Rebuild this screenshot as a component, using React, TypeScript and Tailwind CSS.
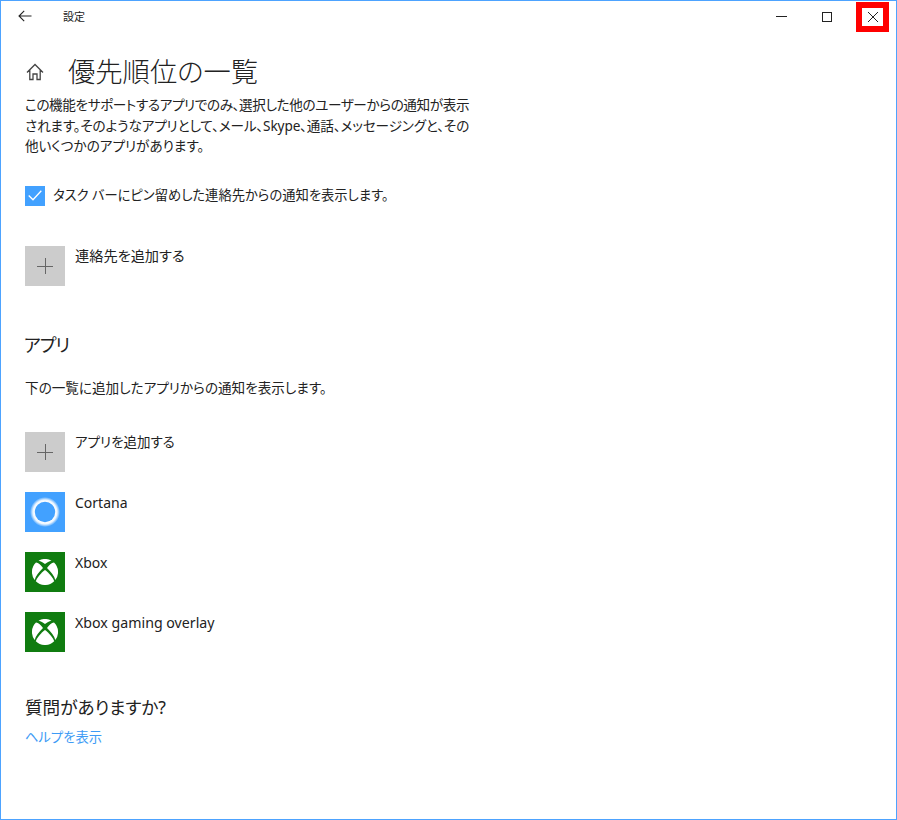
import type { ReactNode } from 'react';

const font = "font-['Noto_Sans','Noto_Sans_CJK_JP',sans-serif] [font-feature-settings:'palt']";

function XboxIcon() {
  return (
    <div className="flex h-10 w-10 shrink-0 items-center justify-center bg-[#107c10]">
      <svg viewBox="0 0 26 26" className="h-[26px] w-[26px]" fill="#fff">
        <path d="M6.5 1.8 A13 13 0 0 1 19.5 1.8 C17 2.2 15 3.5 13 5 C11 3.5 9 2.2 6.5 1.8Z" />
        <path d="M4 3.6 C6.5 3.8 9 6.5 11 9 C7 13 3.5 17 2.7 21 A13 13 0 0 1 4 3.6Z" />
        <path d="M22 3.6 C19.5 3.8 17 6.5 15 9 C19 13 22.5 17 23.3 21 A13 13 0 0 0 22 3.6Z" />
        <path d="M13 11 C16.5 13.5 21 18.5 22.2 22.2 A13 13 0 0 1 3.8 22.2 C5 18.5 9.5 13.5 13 11Z" />
      </svg>
    </div>
  );
}

function CortanaIcon() {
  return (
    <div className="flex h-10 w-10 shrink-0 items-center justify-center bg-[#42a1ff]">
      <svg viewBox="0 0 30 30" className="h-[30px] w-[30px]">
        <defs>
          <radialGradient id="cortana-glow" cx="50%" cy="50%" r="50%">
            <stop offset="68%" stopColor="#fff" stopOpacity="1" />
            <stop offset="80%" stopColor="#fff" stopOpacity="0.9" />
            <stop offset="100%" stopColor="#fff" stopOpacity="0" />
          </radialGradient>
        </defs>
        <circle cx="15" cy="15" r="15" fill="url(#cortana-glow)" />
        <circle cx="15" cy="15" r="10.2" fill="#42a1ff" />
      </svg>
    </div>
  );
}

function AddTile() {
  return (
    <div className="flex h-10 w-10 shrink-0 items-center justify-center bg-[#cccccc]">
      <svg viewBox="0 0 16 16" className="h-4 w-4" stroke="#666666" strokeWidth="1">
        <path d="M0 8.5 H16 M8.5 0 V16" />
      </svg>
    </div>
  );
}

function Row({ icon, label, labelClass }: { icon: ReactNode; label: string; labelClass: string }) {
  return (
    <div className="flex h-10 gap-2.5">
      {icon}
      <span className={`leading-5 text-[#222222] ${labelClass}`}>{label}</span>
    </div>
  );
}

export default function App() {
  return (
    <div className={`flex h-[820px] w-[897px] flex-col border border-[#4da3ff] bg-white ${font}`}>
      <div className="flex h-[31px] shrink-0 items-center">
        <svg viewBox="0 0 14 12" className="ml-[17px] -mt-[2px] h-3 w-[14px]" fill="none" stroke="#222222" strokeWidth="1.1">
          <path d="M13.5 6 H1 M6.2 0.8 L1 6 L6.2 11.2" />
        </svg>
        <span className="ml-[31px] mt-[2px] text-[11px] text-[#222222]">設定</span>
        <div className="ml-auto flex items-center">
          <div className="h-px w-[11px] bg-[#222222]" />
          <div className="ml-[35px] h-[10px] w-[10px] border border-[#222222]" />
          <div className="ml-[24px] mr-[7px] flex h-[30px] w-[33px] items-center justify-center border-[6px] border-[#ff0000]">
            <svg viewBox="0 0 12 12" className="h-3 w-3">
              <path d="M1 1 L11 11 M11 1 L1 11" stroke="#222222" strokeWidth="1" />
            </svg>
          </div>
        </div>
      </div>

      <div className="flex flex-col pl-6">
        <div className="mt-[20px] flex items-center">
          <svg viewBox="0 0 18 18" className="ml-px h-[18px] w-[18px]" fill="none" stroke="#444444" strokeWidth="1.3">
            <path d="M1 9.5 L9 1.5 L17 9.5 M3.8 7 V16.5 H7 V11 H11 V16.5 H14.2 V7" />
          </svg>
          <h1 className="ml-[24px] text-[27.3px] leading-10 font-light text-[#222222]">優先順位の一覧</h1>
        </div>

        <p className="mt-[3px] whitespace-nowrap text-[13.6px] leading-[20.5px] text-[#222222]">
          <span className="tracking-[-0.38px]">この機能をサポートするアプリでのみ、選択した他のユーザーからの通知が表示</span>
          <br />
          <span className="tracking-[-0.12px]">されます。そのようなアプリとして、メール、Skype、通話、メッセージングと、その</span>
          <br />
          他いくつかのアプリがあります。
        </p>

        <div className="mt-[29px] flex items-center gap-2">
          <div className="flex h-5 w-5 items-center justify-center bg-[#42a1ff]">
            <svg viewBox="0 0 14 11" className="h-[11px] w-[14px]" fill="none" stroke="#fff" strokeWidth="1.3">
              <path d="M0.7 5.5 L5 9.8 L13.3 0.8" />
            </svg>
          </div>
          <span className="text-[13.3px] text-[#222222]">タスク バーにピン留めした連絡先からの通知を表示します。</span>
        </div>

        <div className="mt-[40px]">
          <Row icon={<AddTile />} label="連絡先を追加する" labelClass="text-[14.2px]" />
        </div>

        <h2 className="mt-[45px] -ml-px text-[18px] leading-7 tracking-[-1px] text-[#222222]">アプリ</h2>
        <p className="mt-[19px] text-[13.6px] leading-5 text-[#222222]">下の一覧に追加したアプリからの通知を表示します。</p>

        <div className="mt-[34px] flex flex-col gap-5">
          <Row icon={<AddTile />} label="アプリを追加する" labelClass="text-[13.5px]" />
          <Row icon={<CortanaIcon />} label="Cortana" labelClass="mt-px text-[14px]" />
          <Row icon={<XboxIcon />} label="Xbox" labelClass="mt-px text-[14px]" />
          <Row icon={<XboxIcon />} label="Xbox gaming overlay" labelClass="mt-px text-[14.2px]" />
        </div>

        <h2 className="mt-[41px] text-[17.6px] leading-7 text-[#222222]">質問がありますか?</h2>
        <a className="mt-[6px] text-[13.3px] leading-5 text-[#3d9bf5]">ヘルプを表示</a>
      </div>
    </div>
  );
}
